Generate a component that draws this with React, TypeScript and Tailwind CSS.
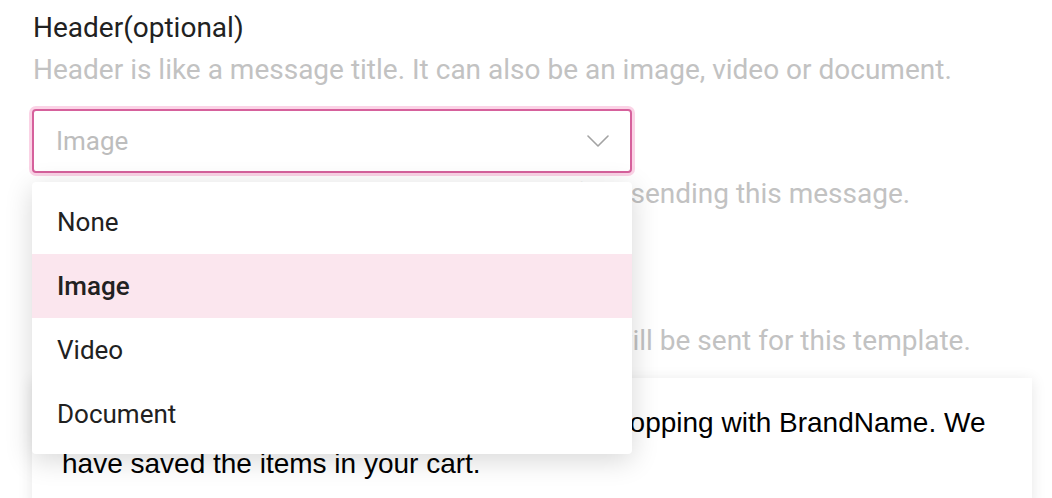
import { useState } from 'react';

const OPTIONS = ['None', 'Image', 'Video', 'Document'];

const roboto = { fontFamily: 'Roboto, "Liberation Sans", sans-serif' };

function Chevron() {
  return (
    <svg width="22" height="12" viewBox="0 0 22 12" fill="none" className="shrink-0">
      <path d="M1 1 L11 11 L21 1" stroke="#a3a3a3" strokeWidth="1.6" strokeLinecap="round" strokeLinejoin="round" />
    </svg>
  );
}

export default function App() {
  const [value, setValue] = useState('Image');

  return (
    <div className="min-h-[498px] w-[1052px] overflow-hidden bg-white" style={roboto}>
      <div className="px-[33px] pt-[7px]">
        <div className="text-[28px] leading-[42px] text-[#212121]">Header(optional)</div>
        <div className="whitespace-nowrap text-[28px] leading-[42px] text-[#c2c2c2]">
          Header is like a message title. It can also be an image, video or document.
        </div>

        <div className="relative -ml-px mt-[18px] w-[600px]">
          <button
            type="button"
            className="flex h-[64px] w-full items-center justify-between rounded-[4px] border-2 border-[#d6619c] bg-white pl-[22px] pr-[21px] text-left shadow-[0_0_0_3px_#fbd3e6]"
          >
            <span className="text-[26px] text-[#bdbdbd]">{value}</span>
            <Chevron />
          </button>

          <div className="absolute left-0 right-0 top-[73px] z-10 rounded-[4px] bg-white py-2 shadow-[0_6px_28px_rgba(0,0,0,0.16)]">
            {OPTIONS.map((option) => {
              const active = option === value;
              return (
                <div
                  key={option}
                  onClick={() => setValue(option)}
                  className={`flex h-[64px] cursor-pointer items-center px-[25px] text-[26px] text-[#212121] ${
                    active ? 'bg-[#fbe6ee] font-medium' : ''
                  }`}
                >
                  {option}
                </div>
              );
            })}
          </div>
        </div>

        <div className="whitespace-nowrap text-[28px] leading-[42px] text-[#c2c2c2]">
          The body text is the main content shown before sending this message.
        </div>

        <div className="mt-[63px] text-[28px] leading-[42px] text-[#212121]">Footer(optional)</div>
        <div className="whitespace-nowrap text-[28px] leading-[42px] text-[#c2c2c2]">
          A footer is a short line of text at the end which will be sent for this template.
        </div>

        <div className="-ml-px mt-4 w-[1000px] bg-white px-[30px] pb-6 pt-6 shadow-[0_2px_14px_rgba(0,0,0,0.1)]">
          <p className="text-[28px] leading-[41px] text-black" style={{ fontFamily: '"Liberation Sans", Arial, sans-serif' }}>
            Hi {'{{1}}'}, you left some items. Thank you for shopping with BrandName. We have saved the items in your cart.
          </p>
        </div>
      </div>
    </div>
  );
}
